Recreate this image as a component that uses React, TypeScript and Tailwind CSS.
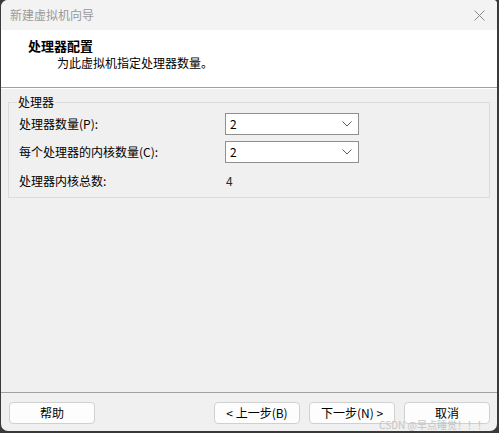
import React from 'react';

const font = { fontFamily: '"Noto Sans CJK SC", "Microsoft YaHei", sans-serif' };

const Combo: React.FC<{ value: string }> = ({ value }) => (
  <div className="flex h-[22px] w-[134px] items-center justify-between border border-[#8f8f8f] bg-white pl-[4px] pr-[6px] text-[12px] text-black">
    <span>{value}</span>
    <svg width="10" height="6" viewBox="0 0 10 6" fill="none">
      <path d="M0.5 0.5 L5 5 L9.5 0.5" stroke="#606060" strokeWidth="1" />
    </svg>
  </div>
);

const Button: React.FC<{ label: string; className?: string }> = ({ label, className }) => (
  <div
    className={`flex h-[22px] w-[86px] items-center justify-center rounded-[4px] border border-[#d0d0d0] bg-[#fdfdfd] text-[12px] text-black ${className ?? ''}`}
  >
    {label}
  </div>
);

const App: React.FC = () => {
  return (
    <div className="h-[433px] w-[499px] bg-[#3a3a3a] pb-[2px] pl-px pr-[2px]" style={font}>
      <div className="relative flex h-full w-full flex-col overflow-hidden rounded-[7px] rounded-tr-[4px] bg-[#f0f0f0]">
        {/* title bar */}
        <div className="flex h-[30px] shrink-0 items-center justify-between bg-[#f3f3f3] pl-[9px] pr-[12px]">
          <span className="text-[12px] text-[#9a9a9a]">新建虚拟机向导</span>
          <svg width="11" height="11" viewBox="0 0 11 11" fill="none">
            <path d="M0.5 0.5 L10.5 10.5 M10.5 0.5 L0.5 10.5" stroke="#8a8a8a" strokeWidth="1" />
          </svg>
        </div>

        {/* header */}
        <div className="flex h-[57px] shrink-0 flex-col bg-white pl-[27px] pt-[7px]">
          <span className="text-[13px] font-bold leading-[18px] text-black">处理器配置</span>
          <span className="pl-[29px] text-[12px] leading-[16px] text-black">为此虚拟机指定处理器数量。</span>
        </div>
        <div className="h-px shrink-0 bg-[#a0a0a0]" />
        <div className="h-px shrink-0 bg-white" />

        {/* body */}
        <div className="flex flex-1 flex-col px-[7px] pt-[13px]">
          <div className="relative h-[96px] border border-[#dcdcdc]">
            <span className="absolute left-[8px] top-[-9px] bg-[#f0f0f0] px-px text-[12px] leading-[16px] text-black">
              处理器
            </span>
            <div className="grid grid-cols-[206px_1fr] gap-y-[6px] pl-[10px] pt-[10px] text-[12px] text-black">
              <div className="flex h-[22px] items-center">处理器数量(P):</div>
              <Combo value="2" />
              <div className="flex h-[22px] items-center">每个处理器的内核数量(C):</div>
              <Combo value="2" />
              <div className="flex h-[22px] items-center pt-[2px]">处理器内核总数:</div>
              <div className="flex h-[22px] items-center pl-px pt-[2px] text-[#1f2f1f]">4</div>
            </div>
          </div>
        </div>

        {/* footer */}
        <div className="h-px shrink-0 bg-[#a0a0a0]" />
        <div className="flex h-[38px] shrink-0 items-start pl-[8px] pt-[9px]">
          <Button label="帮助" />
          <Button label="< 上一步(B)" className="ml-[119px]" />
          <Button label="下一步(N) >" className="ml-[9px]" />
          <Button label="取消" className="ml-[9px]" />
        </div>

        <span className="pointer-events-none absolute bottom-[1px] right-[10px] text-[10px] leading-none text-[#c4c4c4]">
          CSDN @早点睡觉！！！
        </span>
      </div>
    </div>
  );
};

export default App;
